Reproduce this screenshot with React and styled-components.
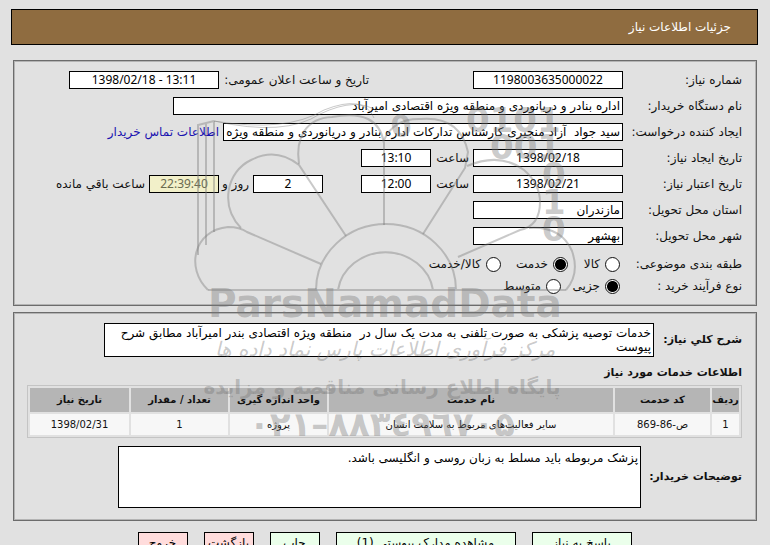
import React from "react";
import styled, { createGlobalStyle, css } from "styled-components";

const GlobalStyle = createGlobalStyle`
  * {
    box-sizing: border-box;
  }

  html,
  body {
    height: 100%;
    margin: 0;
    overflow: hidden;
  }

  body {
    background: #e1e1e1;
    color: #111;
    font: 12px/18px "DejaVu Sans", sans-serif;
  }
`;

const Page = styled.main`
  position: relative;
  padding: 9px 12px 0 11px;
`;

const TitleBar = styled.header`
  display: flex;
  align-items: center;
  height: 36px;
  padding: 0 26px;
  border: 1px solid #000;
  background: #8f6c40;
`;

const Title = styled.h1`
  margin: 0;
  color: #fff;
  font-size: 12px;
  font-weight: normal;
`;

const Panel = styled.section`
  margin: ${(props) => props.$top}px 1px 0 2px;
  padding: 10px 14px ${(props) => props.$bottom}px 13px;
  border: 1px solid #6c6c6c;
  box-shadow: inset 0 0 0 1px #b4b4b4;
`;

const Row = styled.div`
  display: flex;
  align-items: center;
  height: 18px;
  margin-bottom: 8px;
`;

const RadioRow = styled(Row)`
  height: 22px;
  margin: 0;
`;

const Label = styled.label`
  flex: none;
  width: ${(props) => props.$width}px;
  padding: 0 ${(props) => props.$indent || 0}px;
  white-space: nowrap;
`;

const boxed = css`
  border: 1px solid #000;
  border-radius: 0;
  background: #fff;
  color: #000;
  font: inherit;
  outline: none;
`;

const Field = styled.input`
  ${boxed}
  flex: none;
  width: ${(props) => props.$width}px;
  height: 18px;
  margin-left: ${(props) => props.$after || 0}px;
  padding: 0 2px;
`;

const NumberField = styled(Field)`
  font-family: "Noto Sans", sans-serif;
  text-align: center;
`;

const Countdown = styled(NumberField)`
  background: #f2f0c9;
  color: #6b6b50;
`;

const ContactLink = styled.a`
  padding: 0 4px;
  color: #1a12b0;
  text-decoration: none;
`;

const Option = styled.label`
  display: flex;
  align-items: center;
  flex: none;
  gap: 5px;
  width: ${(props) => props.$width}px;
  padding-right: 3px;
  white-space: nowrap;
`;

const Radio = styled.input.attrs({ type: "radio" })`
  appearance: none;
  flex: none;
  width: 15px;
  height: 15px;
  margin: 0;
  border: 1px solid #111;
  border-radius: 50%;
  background: #fff;

  &:checked {
    background: radial-gradient(circle, #000 5px, #fff 6px);
  }
`;

const NoteRow = styled.div`
  display: flex;
  align-items: center;
`;

const NoteLabel = styled.label`
  flex: none;
  width: ${(props) => props.$width}px;
  font-size: 11px;
  font-weight: bold;
  white-space: nowrap;
`;

const Note = styled.textarea`
  ${boxed}
  display: block;
  width: ${(props) => props.$width}px;
  height: ${(props) => props.$height}px;
  padding: 2px;
  line-height: ${(props) => props.$line}px;
  resize: none;
  overflow: hidden;
`;

const SectionTitle = styled.h2`
  margin: 8px 0 4px;
  font-size: 11px;
  line-height: 16px;
`;

const Table = styled.table`
  width: 100%;
  margin-bottom: 8px;
  border: 1px solid #c4c4c4;
  border-collapse: separate;
  border-spacing: 2px;
  table-layout: fixed;
  font-size: 10px;
  line-height: 14px;
  text-align: center;
`;

const HeadCell = styled.th`
  height: 24px;
  padding: 0;
  background: #b5b5b5;
  white-space: nowrap;
`;

const Cell = styled.td`
  height: 21px;
  padding: 0;
  background: #f7f7f7;
`;

const Actions = styled.footer`
  display: flex;
  justify-content: center;
  gap: 16px;
  padding-top: 11px;
`;

const Action = styled.button`
  ${boxed}
  width: ${(props) => props.$width}px;
  height: 22px;
  padding: 0;
  background: ${(props) => (props.$leave ? "#ffdcdc" : "#ebffeb")};
  font-size: 12px;
  white-space: nowrap;
`;

const Watermark = styled.svg`
  position: absolute;
  top: 90px;
  left: 190px;
  width: 400px;
  height: 360px;
  pointer-events: none;
`;

const columns = [
  { title: "ردیف", width: 27, value: "1" },
  { title: "کد خدمت", width: 95, value: "ص-86-869" },
  { title: "نام خدمت", value: "سایر فعالیت‌های مربوط به سلامت انسان" },
  { title: "واحد اندازه گیری", width: 97, value: "پروژه" },
  { title: "تعداد / مقدار", width: 97, value: "1" },
  { title: "تاریخ نیاز", width: 99, value: "1398/02/31" },
];

const actions = [
  { title: "پاسخ به نیاز", width: 100 },
  { title: "مشاهده مدارک پیوستی (1)", width: 180 },
  { title: "چاپ", width: 50 },
  { title: "بازگشت", width: 50, leave: true },
  { title: "خروج", width: 50, leave: true },
];

const Brand = () => (
  <Watermark viewBox="0 0 400 360" direction="ltr" aria-hidden="true">
    <g fill="none" stroke="#777" strokeOpacity="0.4" strokeWidth="2">
      <path d="M18 200H376M126 200a69 65 0 0 1 140 0M148 200a48 44 0 0 1 95 0" />
      <path d="M18 200C-5 178 4 140 38 137Q50 137 57 142L131 174" />
      <path d="M51 138C30 116 36 82 61 70Q86 57 109 75L156 146" />
      <path d="M109 74C105 48 116 28 142 27Q188 18 194 53V135" />
      <path d="M194 50Q204 28 231 29Q270 26 278 62L275 78L233 144" />
      <path d="M277 76Q310 62 334 80Q350 94 350 112Q350 136 330 140L268 167" />
      <path d="M339 138Q371 136 382 161Q390 184 376 200" />
      <path d="M8 165V35L24 31M16 155V34M24 142V31" />
      <path d="M24 31Q95 47 130 24Q168 6 188 22M24 31Q96 43 134 20Q174 4 184 28" strokeWidth="1" />
    </g>
    <g fill="#777" fillOpacity="0.4" fontWeight="bold" fontFamily="DejaVu Sans">
      <g fontSize="34">
        <text x="200" y="46" transform="rotate(-8 215 30)" fontSize="30">0</text>
        <text x="276" y="42">0101</text>
        <text x="300" y="69">001</text>
        <text x="352" y="97">0</text>
        <text x="352" y="124">1</text>
        <text x="352" y="151">0</text>
      </g>
      <text x="18" y="227" fontSize="39">ParsNamadData</text>
    </g>
    <g fill="#777" fillOpacity="0.4" textAnchor="middle" direction="rtl" fontFamily="DejaVu Sans">
      <text x="195" y="266" fontSize="20" fontStyle="italic">مرکز فرآوری اطلاعات پارس نماد داده ها</text>
      <text x="192" y="304" fontSize="20" fontWeight="bold">پایگاه اطلاع رسانی مناقصه و مزایده</text>
      <text x="192" y="346" fontSize="34" fontWeight="bold" direction="ltr">۰۲۱–۸۸۳٤۹٦۷۰۵</text>
    </g>
  </Watermark>
);

const RequestDetails = () => (
  <Panel $top={15} $bottom={8}>
    <Row>
      <Label $width={119} htmlFor="number">شماره نیاز:</Label>
      <NumberField id="number" $width={150} $after={100} defaultValue="1198003635000022" />
      <Label $width={154} $indent={4} htmlFor="announced">تاریخ و ساعت اعلان عمومی:</Label>
      <NumberField id="announced" $width={150} dir="ltr" defaultValue="1398/02/18 - 13:11" />
    </Row>
    <Row>
      <Label $width={119} htmlFor="buyer">نام دستگاه خریدار:</Label>
      <Field id="buyer" $width={450} defaultValue="اداره بنادر و دریانوردی و منطقه ویژه اقتصادی امیرآباد" />
    </Row>
    <Row>
      <Label $width={119} htmlFor="creator">ایجاد کننده درخواست:</Label>
      <Field
        id="creator"
        $width={400}
        defaultValue="سید جواد  آزاد منجیری کارشناس تدارکات اداره بنادر و دریانوردی و منطقه ویژه اقتصادی امیرآباد"
      />
      <ContactLink href="#contact">اطلاعات تماس خریدار</ContactLink>
    </Row>
    <Row>
      <Label $width={119} htmlFor="created">تاریخ ایجاد نیاز:</Label>
      <NumberField id="created" $width={150} defaultValue="1398/02/18" />
      <Label $width={42} $indent={4} htmlFor="created-hour">ساعت</Label>
      <NumberField id="created-hour" $width={70} defaultValue="13:10" />
    </Row>
    <Row>
      <Label $width={119} htmlFor="expires">تاریخ اعتبار نیاز:</Label>
      <NumberField id="expires" $width={150} defaultValue="1398/02/21" />
      <Label $width={42} $indent={4} htmlFor="expires-hour">ساعت</Label>
      <NumberField id="expires-hour" $width={70} $after={38} defaultValue="12:00" />
      <NumberField id="days" $width={70} defaultValue="2" />
      <Label $width={34} $indent={4} htmlFor="days">روز و</Label>
      <Countdown id="left" $width={70} defaultValue="22:39:40" />
      <Label $width={100} $indent={4} htmlFor="left">ساعت باقي مانده</Label>
    </Row>
    <Row>
      <Label $width={119} htmlFor="province">استان محل تحویل:</Label>
      <Field id="province" $width={150} defaultValue="مازندران" />
    </Row>
    <Row>
      <Label $width={119} htmlFor="city">شهر محل تحویل:</Label>
      <Field id="city" $width={150} defaultValue="بهشهر" />
    </Row>
    <RadioRow role="radiogroup" aria-label="طبقه بندی موضوعی">
      <Label as="span" $width={119}>طبقه بندی موضوعی:</Label>
      <Option $width={52}><Radio name="category" />کالا</Option>
      <Option $width={67}><Radio name="category" defaultChecked />خدمت</Option>
      <Option $width={90}><Radio name="category" />کالا/خدمت</Option>
    </RadioRow>
    <RadioRow role="radiogroup" aria-label="نوع فرآیند خرید">
      <Label as="span" $width={119}>نوع فرآیند خرید :</Label>
      <Option $width={59}><Radio name="process" defaultChecked />جزیی</Option>
      <Option $width={70}><Radio name="process" />متوسط</Option>
    </RadioRow>
  </Panel>
);

const ServiceDetails = () => (
  <Panel $top={6} $bottom={12}>
    <NoteRow>
      <NoteLabel $width={88} htmlFor="summary">شرح کلي نیاز:</NoteLabel>
      <Note
        id="summary"
        $width={550}
        $height={34}
        $line={14}
        defaultValue="خدمات توصیه پزشکی به صورت تلفنی به مدت یک سال در  منطقه ویژه اقتصادی بندر امیرآباد مطابق شرح پیوست"
      />
    </NoteRow>
    <SectionTitle>اطلاعات خدمات مورد نیاز</SectionTitle>
    <Table>
      <colgroup>
        {columns.map((column) => (
          <col key={column.title} width={column.width} />
        ))}
      </colgroup>
      <thead>
        <tr>
          {columns.map((column) => (
            <HeadCell key={column.title}>{column.title}</HeadCell>
          ))}
        </tr>
      </thead>
      <tbody>
        <tr>
          {columns.map((column) => (
            <Cell key={column.title}>{column.value}</Cell>
          ))}
        </tr>
      </tbody>
    </Table>
    <NoteRow>
      <NoteLabel $width={101} htmlFor="remarks">توضیحات خریدار:</NoteLabel>
      <Note
        id="remarks"
        $width={523}
        $height={62}
        $line={18}
        defaultValue="پزشک مربوطه باید مسلط به زبان روسی و انگلیسی باشد."
      />
    </NoteRow>
  </Panel>
);

const App = () => (
  <Page dir="rtl">
    <GlobalStyle />
    <TitleBar>
      <Title>جزئیات اطلاعات نیاز</Title>
    </TitleBar>
    <RequestDetails />
    <ServiceDetails />
    <Actions>
      {actions.map((action) => (
        <Action key={action.title} type="button" $width={action.width} $leave={action.leave}>
          {action.title}
        </Action>
      ))}
    </Actions>
    <Brand />
  </Page>
);

export default App;
